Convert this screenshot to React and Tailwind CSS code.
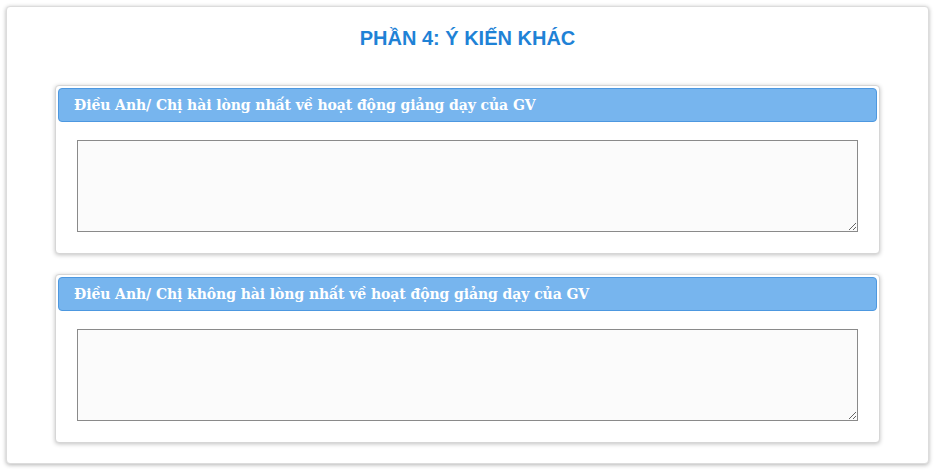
import React from "react";

function Panel({ title }) {
  return (
    <div className="rounded-[4px] border border-[#d6d6d6] bg-white p-[2px] shadow-[0_1px_4px_rgba(0,0,0,0.25)]">
      <div
        className="flex h-[34px] items-center rounded-[4px] border border-[#4d98e0] bg-[#77b5ee] pl-[15px] text-[14px] font-bold tracking-[-0.08px] text-white"
        style={{ fontFamily: '"DejaVu Serif", "Liberation Serif", serif' }}
      >
        {title}
      </div>
      <div className="px-[19px] pb-[19px] pt-[18px]">
        <textarea className="block h-[92px] w-full border border-[#8a8a8a] bg-[#fbfbfb] outline-none" />
      </div>
    </div>
  );
}

export default function App() {
  return (
    <div className="min-h-[471px] bg-white pb-[6px] pl-[6px] pr-[8px] pt-[6px]" style={{ fontFamily: '"Liberation Sans", Arial, sans-serif' }}>
      <div className="rounded-[4px] border border-[#dcdcdc] bg-white px-[48px] pb-[20px] pt-[17px] shadow-[0_1px_4px_rgba(0,0,0,0.3)]">
        <h2 className="mb-[33px] text-center text-[20px] font-bold leading-[28px] text-[#1f82d6]">
          PHẦN 4: Ý KIẾN KHÁC
        </h2>
        <div className="flex flex-col gap-[20px]">
          <Panel title="Điều Anh/ Chị hài lòng nhất về hoạt động giảng dạy của GV" />
          <Panel title="Điều Anh/ Chị không hài lòng nhất về hoạt động giảng dạy của GV" />
        </div>
      </div>
    </div>
  );
}
